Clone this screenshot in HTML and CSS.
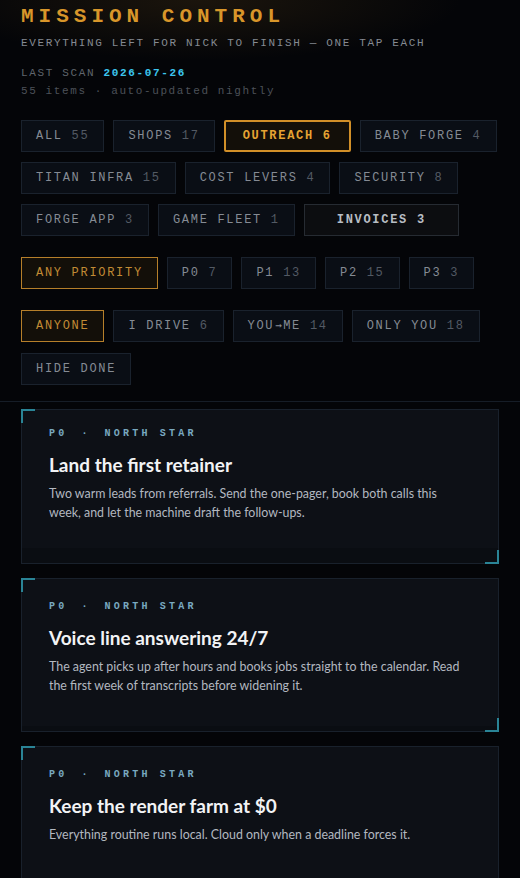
FILE: index.html
```html
<!DOCTYPE html>
<html>
<head>
<meta charset="utf-8">
<link rel="stylesheet" href="styles.css">
</head>
<body>
<header class="head">
  <h1 class="title">MISSION CONTROL</h1>
  <p class="sub">EVERYTHING LEFT FOR NICK TO FINISH — ONE TAP EACH</p>
  <p class="scan">LAST SCAN <span class="date">2026-07-26</span></p>
  <p class="meta">55 items · auto-updated nightly</p>

  <div class="group group-first">
    <button class="chip">ALL <span class="n">55</span></button>
    <button class="chip">SHOPS <span class="n">17</span></button>
    <button class="chip chip-on">OUTREACH <span class="n">6</span></button>
    <button class="chip">BABY FORGE <span class="n">4</span></button>
    <button class="chip">TITAN INFRA <span class="n">15</span></button>
    <button class="chip">COST LEVERS <span class="n">4</span></button>
    <button class="chip">SECURITY <span class="n">8</span></button>
    <button class="chip">FORGE APP <span class="n">3</span></button>
    <button class="chip">GAME FLEET <span class="n">1</span></button>
    <button class="chip chip-focus">INVOICES <span class="n">3</span></button>
  </div>

  <div class="group">
    <button class="chip chip-sel">ANY PRIORITY</button>
    <button class="chip">P0 <span class="n">7</span></button>
    <button class="chip">P1 <span class="n">13</span></button>
    <button class="chip">P2 <span class="n">15</span></button>
    <button class="chip">P3 <span class="n">3</span></button>
  </div>

  <div class="group group-owner">
    <button class="chip chip-sel">ANYONE</button>
    <button class="chip">I DRIVE <span class="n">6</span></button>
    <button class="chip">YOU<span class="arrow">→</span>ME <span class="n">14</span></button>
    <button class="chip">ONLY YOU <span class="n">18</span></button>
    <button class="chip">HIDE DONE</button>
  </div>
</header>

<main class="list">
  <article class="card card-first">
    <div class="tag"><span>P0</span><span>·</span><span>NORTH STAR</span></div>
    <h2 class="card-title">Land the first retainer</h2>
    <p class="card-body">Two warm leads from referrals. Send the one-pager, book both calls this week, and let the machine draft the follow-ups.</p>
  </article>
  <article class="card">
    <div class="tag"><span>P0</span><span>·</span><span>NORTH STAR</span></div>
    <h2 class="card-title">Voice line answering 24/7</h2>
    <p class="card-body">The agent picks up after hours and books jobs straight to the calendar. Read the first week of transcripts before widening it.</p>
  </article>
  <article class="card">
    <div class="tag"><span>P0</span><span>·</span><span>NORTH STAR</span></div>
    <h2 class="card-title">Keep the render farm at $0</h2>
    <p class="card-body">Everything routine runs local. Cloud only when a deadline forces it.</p>
  </article>
</main>
</body>
</html>
```

FILE: styles.css
```css
* { box-sizing: border-box; }
html, body { margin: 0; padding: 0; }
body {
  background: radial-gradient(ellipse 260px 60px at 200px 0px, rgba(70, 50, 20, 0.35), rgba(0,0,0,0) 100%), #040508;
  color: #c8ccd2;
  font-family: "Liberation Mono", "DejaVu Sans Mono", monospace;
  width: 520px;
  height: 878px;
  overflow: hidden;
}
.head {
  padding: 5px 21px 16px 21px;
  border-bottom: 1px solid #161d27;
}
.title {
  margin: 0;
  font-size: 21px;
  line-height: 24px;
  font-weight: 700;
  letter-spacing: 5px;
  color: #d8962a;
}
.sub {
  margin: 6px 0 0 0;
  font-size: 11px;
  line-height: 16px;
  letter-spacing: 1.65px;
  color: #858a92;
}
.scan {
  margin: 13px 0 0 0;
  font-size: 11px;
  line-height: 18px;
  letter-spacing: 1.65px;
  color: #60656d;
}
.date { color: #3cc6ee; font-weight: 700; }
.meta {
  margin: 0;
  font-size: 11px;
  line-height: 18px;
  letter-spacing: 1.6px;
  color: #4c5158;
}
.group {
  display: flex;
  flex-wrap: wrap;
  gap: 10px 9px;
  margin-top: 21px;
}
.group-first { margin-top: 20px; }
.group-owner { row-gap: 11px; }
.chip {
  height: 32px;
  padding: 0 14px;
  background: #0a0e15;
  border: 1px solid #1a222d;
  color: #858b94;
  font-family: "Liberation Mono", "DejaVu Sans Mono", monospace;
  font-size: 12px;
  letter-spacing: 1.7px;
  line-height: 30px;
  white-space: nowrap;
}
.chip .n { color: #535a64; }
.arrow { font-family: "DejaVu Sans Mono", monospace; font-size: 11px; letter-spacing: 0; display: inline-block; width: 8.9px; text-align: center; }
.chip-on {
  background: #130f09;
  border: 2px solid #d18f28;
  color: #e6a332;
  font-weight: 700;
  padding: 0 17px;
  border-radius: 2px;
  line-height: 28px;
}
.chip-on .n { color: #e6a332; }
.chip-sel {
  background: #130f09;
  border: 1px solid #b67f2a;
  color: #c28b35;
}
.chip-focus {
  background: #0c0d10;
  border: 1px solid #262b32;
  color: #b8bdc4;
  font-weight: 700;
  padding: 0 32px;
}
.chip-focus .n { color: #b8bdc4; }

.list {
  display: flex;
  flex-direction: column;
  gap: 14px;
  padding: 7px 21px 0 21px;
}
.card {
  position: relative;
  height: 154px;
  flex: none;
  background: linear-gradient(to bottom, #0d1016 0, #0d1016 147px, #0a0d12 147px);
  border: 1px solid #19212c;
  padding: 21px 27px 0 27px;
}
.card-first {
  height: 155px;
  padding-top: 17px;
  background: linear-gradient(to bottom, #0d1016 0, #0d1016 138px, #0a0d12 138px);
}
.card::before {
  content: "";
  position: absolute;
  left: -1px; top: -1px;
  width: 12px; height: 12px;
  border-left: 2px solid #2a8496;
  border-top: 2px solid #2a8496;
}
.card::after {
  content: "";
  position: absolute;
  right: -1px; bottom: -1px;
  width: 12px; height: 12px;
  border-right: 2px solid #2a8496;
  border-bottom: 2px solid #2a8496;
}
.tag {
  display: flex;
  gap: 14px;
  font-size: 10px;
  line-height: 14px;
  font-weight: 700;
  letter-spacing: 3.2px;
  color: #79a9c0;
}
.card-title {
  margin: 12px 0 0 0;
  font-family: Lato, "Noto Sans", sans-serif;
  font-size: 19px;
  line-height: 24px;
  font-weight: 700;
  color: #f2f3f5;
}
.card-body {
  margin: 8px 0 0 0;
  font-family: Lato, "Noto Sans", sans-serif;
  font-size: 12.4px;
  line-height: 18.5px;
  color: #b3b8c0;
}
```
